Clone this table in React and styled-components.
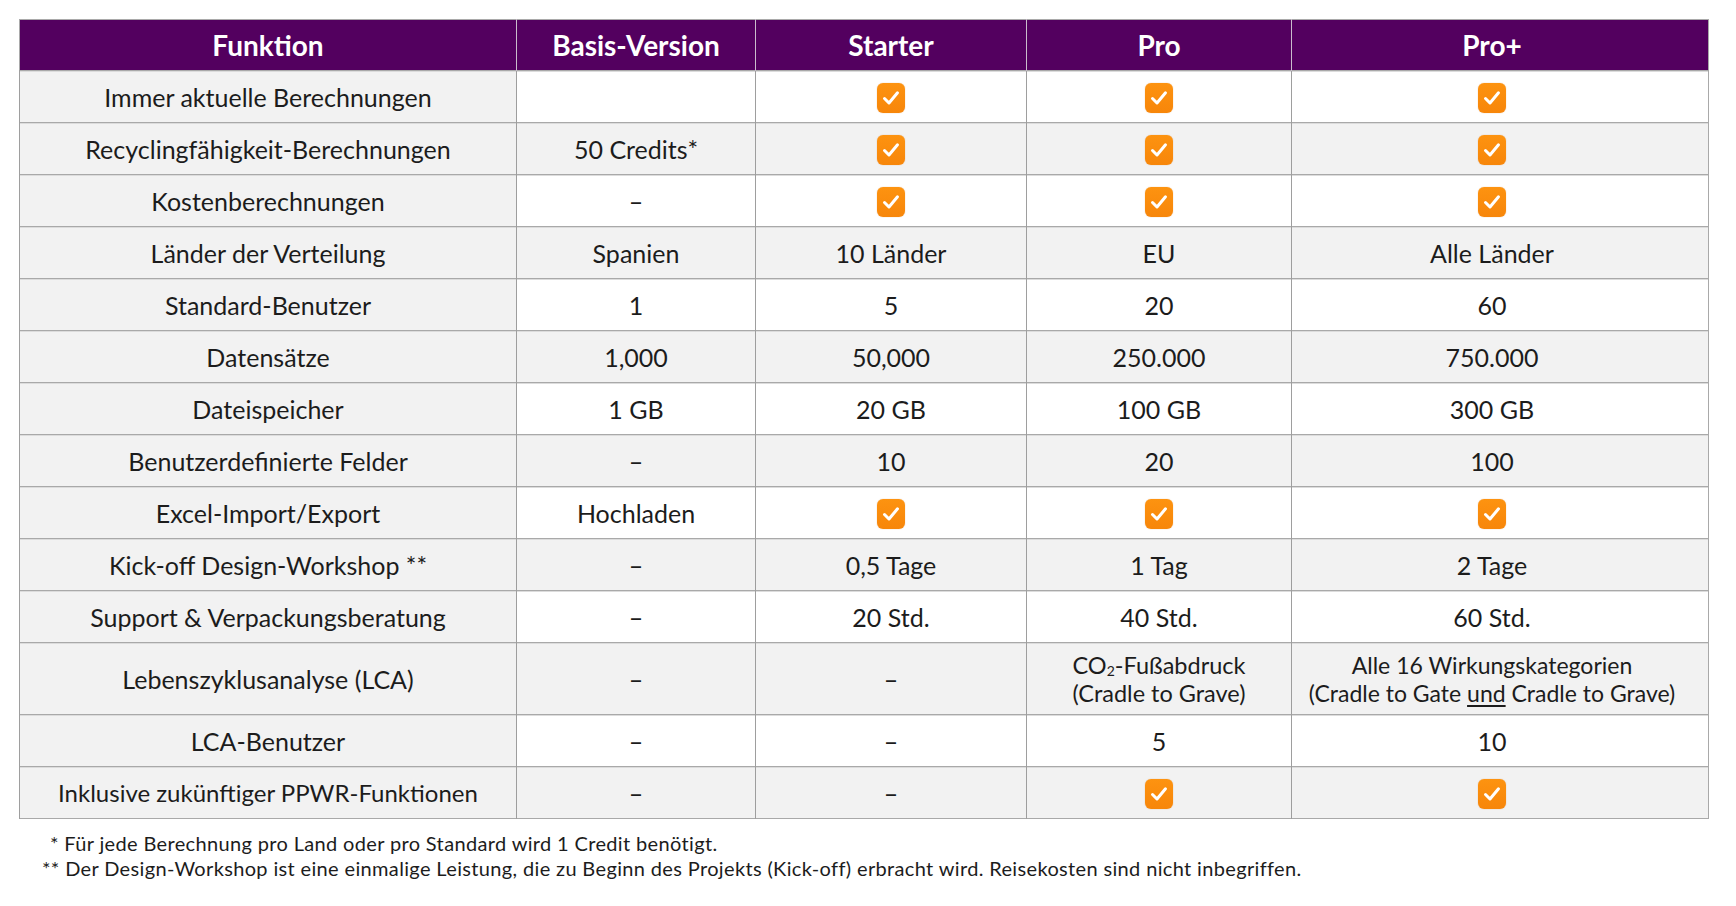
import React from "react";
import styled, { createGlobalStyle } from "styled-components";

const Global = createGlobalStyle`
  html, body { margin: 0; padding: 0; background: #ffffff; }
  body { font-family: Lato, "Noto Sans", sans-serif; color: #1c1c1c; }
`;

const Page = styled.div`
  padding: 19px 20px 0 19px;
  width: 1690px;
`;

const Table = styled.table`
  border-collapse: collapse;
  table-layout: fixed;
  width: 1689px;
  border: 1px solid #a9a9a9;
`;

const HeadCell = styled.th`
  height: 50px;
  padding: 0 ${(p) => (p.$last ? 16 : 0)}px 0 0;
  background: #53005f;
  color: #ffffff;
  font-family: Lato, sans-serif;
  font-weight: 700;
  font-size: 28px;
  text-align: center;
  vertical-align: middle;
  border-left: 1px solid #c9bccc;
  &:first-child { border-left: none; }
`;

const Row = styled.tr`
  height: ${(p) => (p.$tall ? 72 : 52)}px;
`;

const Cell = styled.td`
  padding: 0 ${(p) => (p.$last ? 22 : 6)}px 0 6px;
  text-align: center;
  vertical-align: middle;
  font-size: ${(p) => p.$size || 25}px;
  line-height: 28px;
  color: #1c1c1c;
  background: ${(p) => (p.$shade ? "#f2f2f2" : "#ffffff")};
  border-top: 1px solid #a9a9a9;
  border-left: 1px solid #9e9e9e;
  box-shadow: inset 0 1px 0 #dcdcdc;
`;

const Under = styled.span`
  text-decoration: underline;
  text-underline-offset: 3px;
`;

const Sub = styled.sub`
  font-size: 14px;
  vertical-align: -2px;
  line-height: 0;
`;

const CheckBox = styled.span`
  display: inline-flex;
  width: 28px;
  height: 30px;
  border-radius: 6px;
  background: linear-gradient(#fd9310, #f7860a);
  align-items: center;
  justify-content: center;
  vertical-align: middle;
  box-shadow: 0 0 1px rgba(200, 100, 0, 0.6);
`;

const Notes = styled.div`
  margin-top: 12px;
  padding-left: 23px;
  font-size: 20px;
  letter-spacing: 0.35px;
  line-height: 25px;
  color: #1c1c1c;
`;

const Note = styled.div`
  padding-left: ${(p) => p.$indent}px;
`;

const Check = () => (
  <CheckBox>
    <svg width="20" height="20" viewBox="0 0 20 20">
      <polyline
        points="3.5,10.5 8,15 16.5,4.8"
        fill="none"
        stroke="#ffffff"
        strokeWidth="3"
        strokeLinecap="round"
        strokeLinejoin="round"
      />
    </svg>
  </CheckBox>
);

const C = "check";
const D = "–";

const rows = [
  ["Immer aktuelle Berechnungen", "", C, C, C],
  ["Recyclingfähigkeit-Berechnungen", "50 Credits*", C, C, C],
  ["Kostenberechnungen", D, C, C, C],
  ["Länder der Verteilung", "Spanien", "10 Länder", "EU", "Alle Länder"],
  ["Standard-Benutzer", "1", "5", "20", "60"],
  ["Datensätze", "1,000", "50,000", "250.000", "750.000"],
  ["Dateispeicher", "1 GB", "20 GB", "100 GB", "300 GB"],
  ["Benutzerdefinierte Felder", D, "10", "20", "100"],
  ["Excel-Import/Export", "Hochladen", C, C, C],
  ["Kick-off Design-Workshop **", D, "0,5 Tage", "1 Tag", "2 Tage"],
  ["Support & Verpackungsberatung", D, "20 Std.", "40 Std.", "60 Std."],
  [
    "Lebenszyklusanalyse (LCA)",
    D,
    D,
    {
      size: 23.5,
      text: (
        <>
          CO<Sub>2</Sub>-Fußabdruck
          <br />
          (Cradle to Grave)
        </>
      ),
    },
    {
      size: 23,
      text: (
        <>
          Alle 16 Wirkungskategorien
          <br />
          (Cradle to Gate <Under>und</Under> Cradle to Grave)
        </>
      ),
    },
  ],
  ["LCA-Benutzer", D, D, "5", "10"],
  [{ size: 24, text: "Inklusive zukünftiger PPWR-Funktionen" }, D, D, C, C],
];

const heads = ["Funktion", "Basis-Version", "Starter", "Pro", "Pro+"];
const widths = [497, 239, 271, 265, 417];

const isObj = (v) => v && typeof v === "object" && "text" in v;

export default function App() {
  return (
    <Page>
      <Global />
      <Table>
        <colgroup>
          {widths.map((w, i) => (
            <col key={i} style={{ width: w }} />
          ))}
        </colgroup>
        <thead>
          <tr>
            {heads.map((h, i) => (
              <HeadCell key={h} $last={i === heads.length - 1}>
                {h}
              </HeadCell>
            ))}
          </tr>
        </thead>
        <tbody>
          {rows.map((r, ri) => (
            <Row key={ri} $tall={ri === 11}>
              {r.map((v, ci) => (
                <Cell
                  key={ci}
                  $shade={ci === 0 || ri % 2 === 1}
                  $last={ci === r.length - 1}
                  $size={isObj(v) ? v.size : undefined}
                >
                  {v === C ? <Check /> : isObj(v) ? v.text : v}
                </Cell>
              ))}
            </Row>
          ))}
        </tbody>
      </Table>
      <Notes>
        <Note $indent={8}>* Für jede Berechnung pro Land oder pro Standard wird 1 Credit benötigt.</Note>
        <Note $indent={0}>
          ** Der Design-Workshop ist eine einmalige Leistung, die zu Beginn des Projekts (Kick-off) erbracht wird. Reisekosten sind nicht inbegriffen.
        </Note>
      </Notes>
    </Page>
  );
}
